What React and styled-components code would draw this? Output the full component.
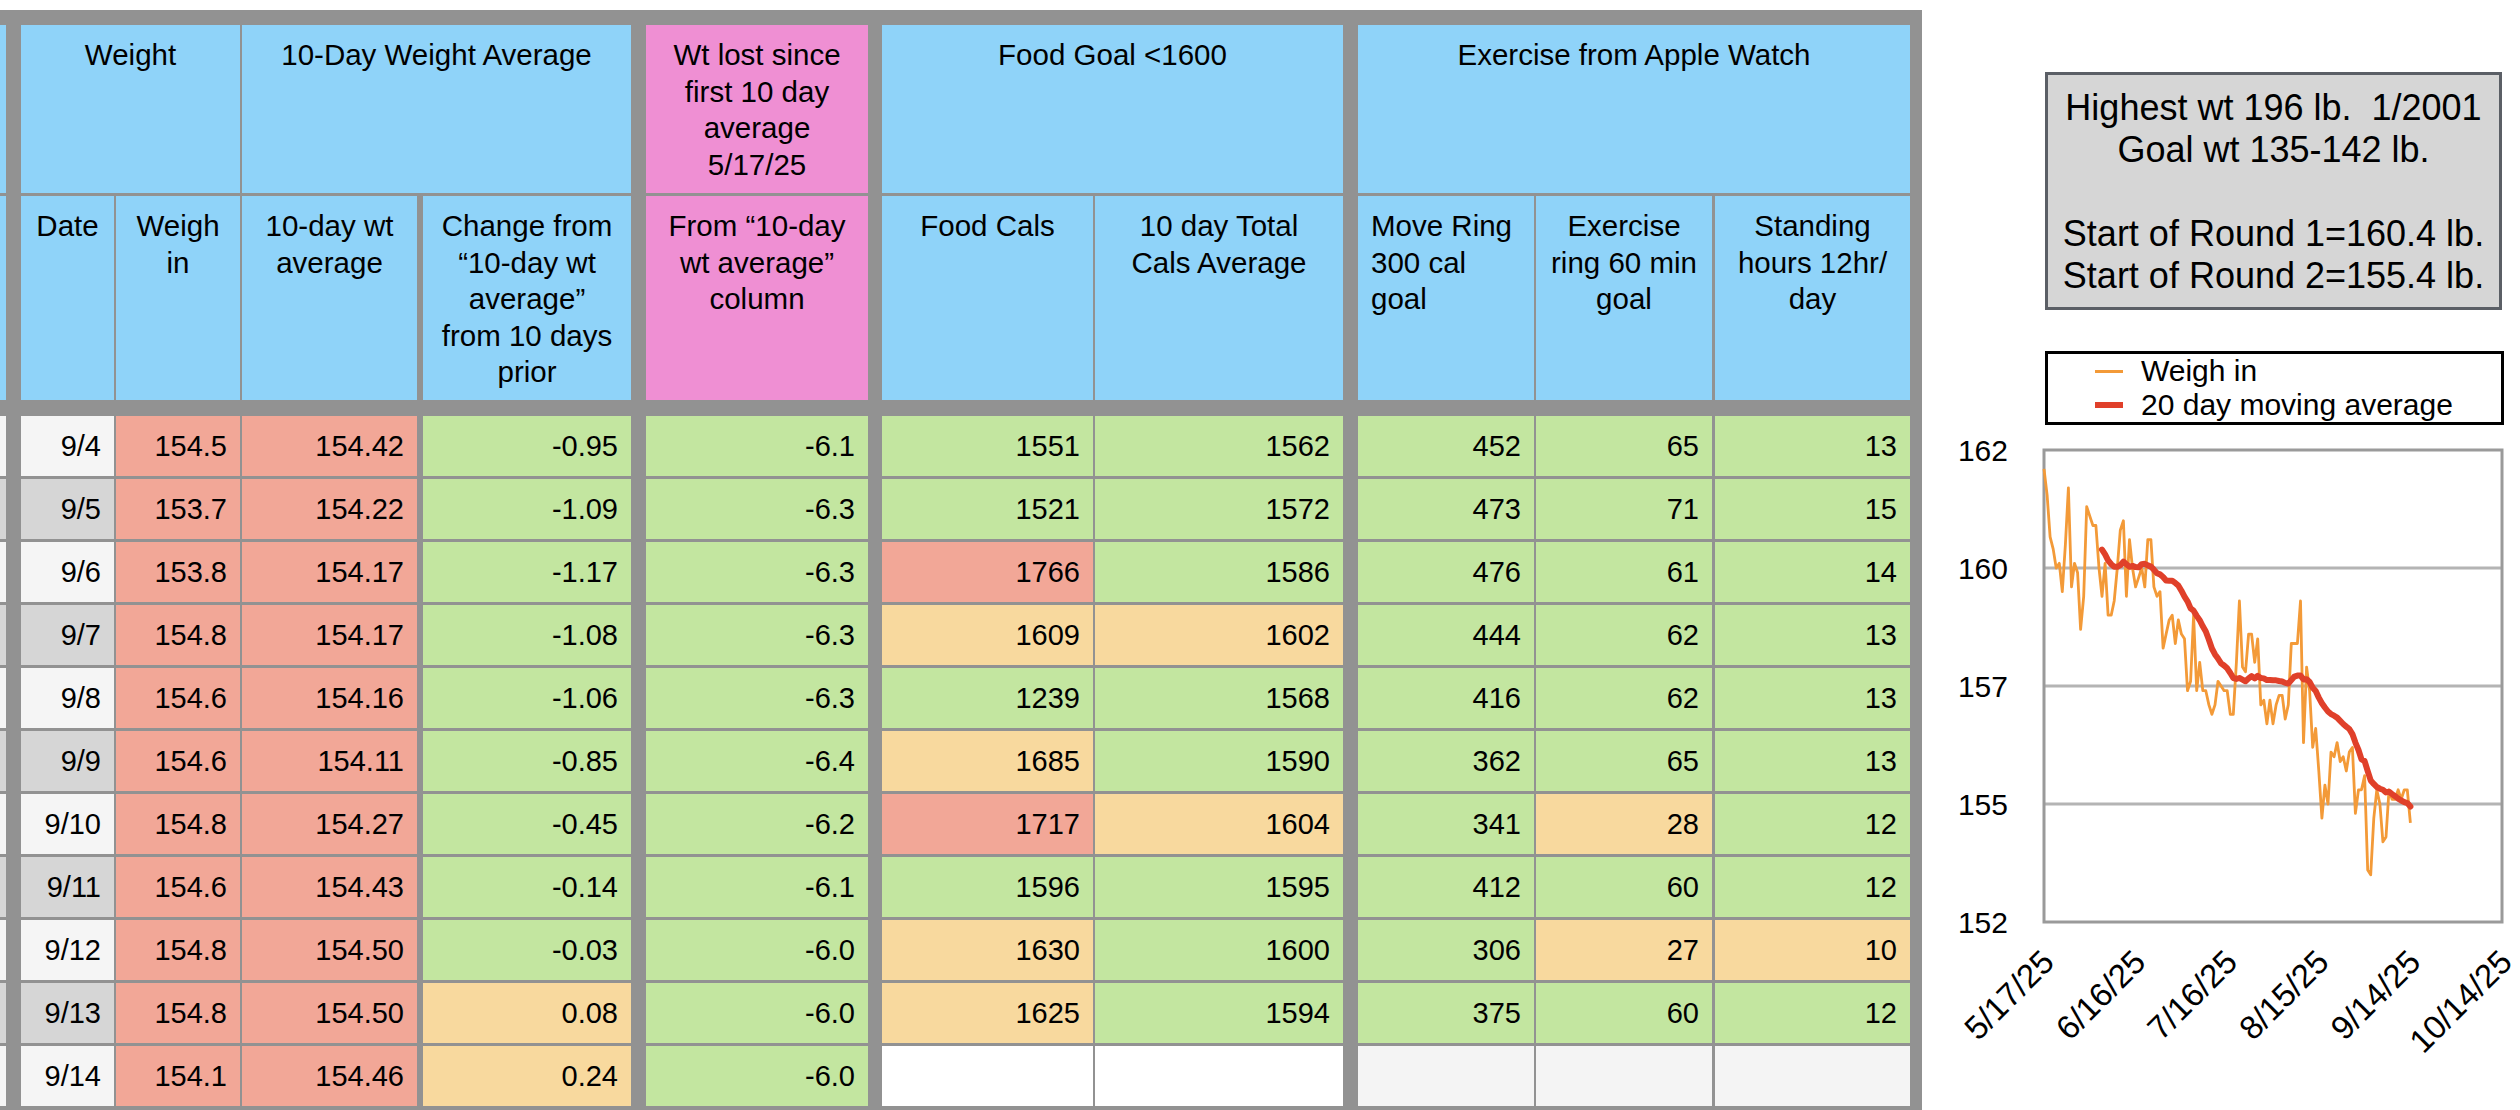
import React from "react";
import styled, { createGlobalStyle } from "styled-components";

const GlobalStyle = createGlobalStyle`
  html, body {
    margin: 0;
    padding: 0;
    background: #ffffff;
  }
  body {
    font-family: "Liberation Sans", Arial, Helvetica, sans-serif;
    color: #000;
    overflow: hidden;
  }
`;

const FILL = {
  blue: "#8fd3f9",
  pink: "#ef8fd3",
  red: "#f2a797",
  green: "#c3e6a0",
  yellow: "#f8d99e",
  light: "#f5f5f5",
  grey: "#d6d6d6",
  blank: "#ffffff",
  empty: "#f4f4f4",
};

// column widths and the gray rule in front of each column
const COLS = [
  { key: "date", w: 93, sep: 15 },
  { key: "weigh", w: 124, sep: 2 },
  { key: "avg", w: 175, sep: 2 },
  { key: "chg", w: 208, sep: 6 },
  { key: "lost", w: 222, sep: 15 },
  { key: "food", w: 211, sep: 14 },
  { key: "tot", w: 248, sep: 2 },
  { key: "move", w: 176, sep: 15 },
  { key: "ex", w: 176, sep: 2 },
  { key: "stand", w: 195, sep: 3 },
];

const GROUPS = [
  { label: "Weight", cols: [0, 1], bg: "blue" },
  { label: "10-Day Weight Average", cols: [2, 3], bg: "blue" },
  { label: "Wt lost since first 10 day average 5/17/25", cols: [4], bg: "pink" },
  { label: "Food Goal <1600", cols: [5, 6], bg: "blue" },
  { label: "Exercise from Apple Watch", cols: [7, 8, 9], bg: "blue" },
];

const SUBHEADS = [
  { label: "Date" },
  { label: "Weigh in" },
  { label: "10-day wt average" },
  { label: "Change from \u201c10-day wt average\u201d from 10 days prior" },
  { label: "From \u201c10-day wt average\u201d column", bg: "pink" },
  { label: "Food Cals" },
  { label: "10 day Total Cals Average" },
  { label: "Move Ring 300 cal goal", align: "left" },
  { label: "Exercise ring 60 min goal" },
  { label: "Standing hours 12hr/ day" },
];

// [value, fill] per column after the date
const ROWS = [
  ["9/4", [["154.5", "red"], ["154.42", "red"], ["-0.95", "green"], ["-6.1", "green"], ["1551", "green"], ["1562", "green"], ["452", "green"], ["65", "green"], ["13", "green"]]],
  ["9/5", [["153.7", "red"], ["154.22", "red"], ["-1.09", "green"], ["-6.3", "green"], ["1521", "green"], ["1572", "green"], ["473", "green"], ["71", "green"], ["15", "green"]]],
  ["9/6", [["153.8", "red"], ["154.17", "red"], ["-1.17", "green"], ["-6.3", "green"], ["1766", "red"], ["1586", "green"], ["476", "green"], ["61", "green"], ["14", "green"]]],
  ["9/7", [["154.8", "red"], ["154.17", "red"], ["-1.08", "green"], ["-6.3", "green"], ["1609", "yellow"], ["1602", "yellow"], ["444", "green"], ["62", "green"], ["13", "green"]]],
  ["9/8", [["154.6", "red"], ["154.16", "red"], ["-1.06", "green"], ["-6.3", "green"], ["1239", "green"], ["1568", "green"], ["416", "green"], ["62", "green"], ["13", "green"]]],
  ["9/9", [["154.6", "red"], ["154.11", "red"], ["-0.85", "green"], ["-6.4", "green"], ["1685", "yellow"], ["1590", "green"], ["362", "green"], ["65", "green"], ["13", "green"]]],
  ["9/10", [["154.8", "red"], ["154.27", "red"], ["-0.45", "green"], ["-6.2", "green"], ["1717", "red"], ["1604", "yellow"], ["341", "green"], ["28", "yellow"], ["12", "green"]]],
  ["9/11", [["154.6", "red"], ["154.43", "red"], ["-0.14", "green"], ["-6.1", "green"], ["1596", "green"], ["1595", "green"], ["412", "green"], ["60", "green"], ["12", "green"]]],
  ["9/12", [["154.8", "red"], ["154.50", "red"], ["-0.03", "green"], ["-6.0", "green"], ["1630", "yellow"], ["1600", "green"], ["306", "green"], ["27", "yellow"], ["10", "yellow"]]],
  ["9/13", [["154.8", "red"], ["154.50", "red"], ["0.08", "yellow"], ["-6.0", "green"], ["1625", "yellow"], ["1594", "green"], ["375", "green"], ["60", "green"], ["12", "green"]]],
  ["9/14", [["154.1", "red"], ["154.46", "red"], ["0.24", "yellow"], ["-6.0", "green"], ["", "blank"], ["", "blank"], ["", "empty"], ["", "empty"], ["", "empty"]]],
];

// daily weigh-ins from 5/17/25 (day 0) to 9/14/25 (day 120)
const WEIGHTS = [
  161.6, 161.05, 160.16, 159.9, 159.5, 159.6, 159.0, 160.0, 161.2, 159.1,
  159.6, 159.4, 158.2, 158.9, 160.8, 160.6, 160.4, 160.4, 159.5, 158.9,
  159.6, 158.5, 158.5, 158.8, 159.5, 160.3, 160.5, 158.9, 160.1, 159.5,
  159.1, 159.3, 159.5, 159.1, 160.1, 160.1, 159.1, 158.9, 159.0, 157.8,
  158.1, 158.4, 158.5, 157.9, 158.4, 158.1, 158.0, 156.9, 157.1, 158.5,
  156.9, 157.5, 156.9, 156.9, 156.6, 156.4, 156.6, 157.1, 157.0, 156.9,
  156.9, 156.4, 156.4, 157.5, 158.8, 157.4, 157.3, 158.1, 158.1, 157.5,
  158.0, 156.6, 156.7, 156.2, 156.7, 156.2, 156.6, 156.8, 156.8, 156.3,
  156.6, 157.9, 157.9, 157.9, 158.8, 155.8, 157.4, 156.9, 155.7, 156.1,
  155.2, 154.2, 154.9, 154.5, 155.6, 155.5, 155.8, 155.4, 155.5, 155.2,
  155.6, 155.7, 154.3, 154.8, 154.8, 155.1, 153.1, 153.0, 154.2, 154.8,
  154.5, 153.7, 153.8, 154.8, 154.6, 154.6, 154.8, 154.6, 154.8, 154.8,
  154.1,
];

const X_TICKS = ["5/17/25", "6/16/25", "7/16/25", "8/15/25", "9/14/25", "10/14/25"];
const Y_TICKS = [
  [162, "162"],
  [159.5, "160"],
  [157, "157"],
  [154.5, "155"],
  [152, "152"],
];

const Page = styled.div`
  display: flex;
  align-items: flex-start;
  width: 2520px;
  height: 1110px;
  overflow: hidden;
`;

const Sheet = styled.div`
  flex: none;
  margin-top: 10px;
  width: 1922px;
  height: 1100px;
  padding-top: 15px;
  box-sizing: border-box;
  background: #929292;
`;

const Row = styled.div`
  display: flex;
  height: ${(p) => p.$h}px;
  margin-top: ${(p) => p.$gap}px;
`;

// the cut-off column at the left edge of the sheet
const Edge = styled.div`
  flex: none;
  width: 6px;
  background: ${(p) => FILL[p.$bg]};
`;

const Cell = styled.div`
  flex: none;
  box-sizing: border-box;
  width: ${(p) => p.$w}px;
  margin-left: ${(p) => p.$sep || 0}px;
  background: ${(p) => FILL[p.$bg]};
`;

const HeadCell = styled(Cell)`
  padding: 12px 13px 0 13px;
  font-size: 29.5px;
  line-height: 36.5px;
  text-align: ${(p) => p.$align || "center"};
`;

const DataCell = styled(Cell)`
  display: flex;
  align-items: center;
  justify-content: flex-end;
  padding-right: 13px;
  font-size: 29px;
`;

const Side = styled.div`
  flex: 1;
  display: flex;
  flex-direction: column;
  padding-top: 72px;
`;

const Notes = styled.div`
  display: flex;
  flex-direction: column;
  padding-left: 123px;
`;

const StatsBox = styled.div`
  width: 457px;
  height: 238px;
  box-sizing: border-box;
  border: 3px solid #5b5f66;
  background: #d6d6d6;
  padding-top: 12px;
  text-align: center;
  font-size: 36px;
  line-height: 42px;
  white-space: pre;
`;

const Legend = styled.div`
  margin-top: 41px;
  width: 459px;
  height: 74px;
  box-sizing: border-box;
  border: 3px solid #000;
  padding-left: 47px;
  display: flex;
  flex-direction: column;
`;

const LegendItem = styled.div`
  display: flex;
  align-items: center;
  height: 34px;
  font-size: 30px;
`;

const Swatch = styled.span`
  flex: none;
  width: 28px;
  height: ${(p) => p.$h}px;
  margin-right: 18px;
  background: ${(p) => p.$c};
`;

const ChartSvg = styled.svg`
  display: block;
  font-family: "Liberation Sans", Arial, Helvetica, sans-serif;
  font-size: 30px;
`;

const AxisDate = styled.text`
  font-size: 33px;
`;

function groupWidth(cols) {
  return cols.reduce((sum, c, i) => sum + COLS[c].w + (i > 0 ? COLS[c].sep : 0), 0);
}

function WeightChart() {
  const L = 122, R = 580, T = 25, B = 497;
  const x = (d) => L + (d / 150) * (R - L);
  const y = (v) => B - ((v - 152) / 10) * (B - T);

  const raw = WEIGHTS.map((v, d) => `${x(d).toFixed(1)},${y(v).toFixed(1)}`).join(" ");
  const avg = WEIGHTS.map((v, d) => {
    if (d < 19) return null;
    const win = WEIGHTS.slice(d - 19, d + 1);
    const m = win.reduce((a, b) => a + b, 0) / win.length;
    return `${x(d).toFixed(1)},${y(m).toFixed(1)}`;
  })
    .filter(Boolean)
    .join(" ");

  return (
    <ChartSvg width="598" height="685" viewBox="0 0 598 685">
      {Y_TICKS.slice(1, 4).map(([v]) => (
        <line key={v} x1={L} x2={R} y1={y(v)} y2={y(v)} stroke="#b4b4b4" strokeWidth="3" />
      ))}
      <rect x={L} y={T} width={R - L} height={B - T} fill="none" stroke="#9a9a9a" strokeWidth="3" />
      {Y_TICKS.map(([v, t]) => (
        <text key={t} x={L - 36} y={y(v) + 11} textAnchor="end">
          {t}
        </text>
      ))}
      {X_TICKS.map((t, i) => {
        const tx = x(i * 30) + 12;
        const ty = B + 42;
        return (
          <AxisDate key={t} x={tx} y={ty} textAnchor="end" transform={`rotate(-45 ${tx} ${ty})`}>
            {t}
          </AxisDate>
        );
      })}
      <polyline points={raw} fill="none" stroke="#f39a38" strokeWidth="2.8" strokeLinejoin="round" />
      <polyline points={avg} fill="none" stroke="#e0402a" strokeWidth="6" strokeLinejoin="round" strokeLinecap="round" />
    </ChartSvg>
  );
}

export default function App() {
  return (
    <>
      <GlobalStyle />
      <Page>
        <Sheet>
          <Row $h={168} $gap={0}>
            <Edge $bg="blue" />
            {GROUPS.map((g) => (
              <HeadCell key={g.label} $w={groupWidth(g.cols)} $sep={COLS[g.cols[0]].sep} $bg={g.bg}>
                {g.label}
              </HeadCell>
            ))}
          </Row>
          <Row $h={204} $gap={3}>
            <Edge $bg="blue" />
            {SUBHEADS.map((h, i) => (
              <HeadCell key={h.label} $w={COLS[i].w} $sep={COLS[i].sep} $bg={h.bg || "blue"} $align={h.align}>
                {h.label}
              </HeadCell>
            ))}
          </Row>
          {ROWS.map(([date, cells], r) => {
            const dateBg = r % 2 === 0 ? "light" : "grey";
            return (
              <Row key={date} $h={60} $gap={r === 0 ? 16 : 3}>
                <Edge $bg={dateBg} />
                <DataCell $w={COLS[0].w} $sep={COLS[0].sep} $bg={dateBg}>
                  {date}
                </DataCell>
                {cells.map(([val, bg], i) => (
                  <DataCell key={COLS[i + 1].key} $w={COLS[i + 1].w} $sep={COLS[i + 1].sep} $bg={bg}>
                    {val}
                  </DataCell>
                ))}
              </Row>
            );
          })}
        </Sheet>
        <Side>
          <Notes>
            <StatsBox>
              {"Highest wt 196 lb.  1/2001\nGoal wt 135-142 lb.\n\nStart of Round 1=160.4 lb.\nStart of Round 2=155.4 lb."}
            </StatsBox>
            <Legend>
              <LegendItem>
                <Swatch $c="#f39a38" $h={3} />
                Weigh in
              </LegendItem>
              <LegendItem>
                <Swatch $c="#e0402a" $h={6} />
                20 day moving average
              </LegendItem>
            </Legend>
          </Notes>
          <WeightChart />
        </Side>
      </Page>
    </>
  );
}
